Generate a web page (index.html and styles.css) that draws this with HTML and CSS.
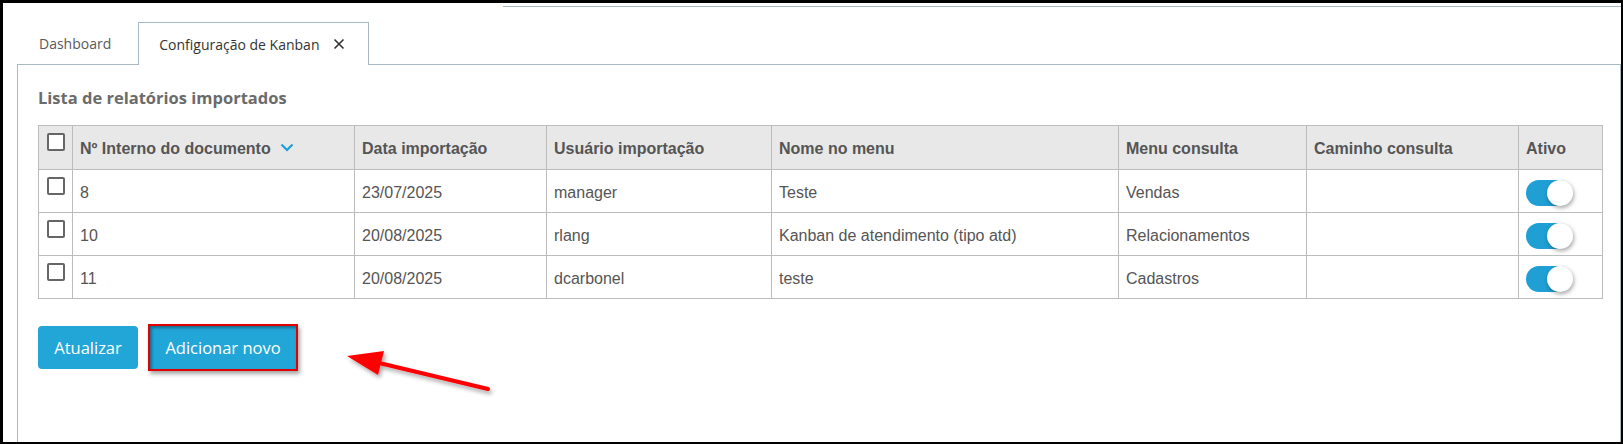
FILE: index.html
```html
<!DOCTYPE html>
<html lang="pt-BR">
<head>
<meta charset="utf-8">
<title>Configuração de Kanban</title>
<link rel="stylesheet" href="styles.css">
</head>
<body>
<div class="frame">
  <div class="topbar"><div class="topline"></div></div>
  <div class="workspace">
    <div class="tabs">
      <div class="tab">Dashboard</div>
      <div class="tab tab-active">Configuração de Kanban
        <svg class="tab-close" width="12" height="12" viewBox="0 0 12 12"><path d="M1.5 1.5 L10.5 10.5 M10.5 1.5 L1.5 10.5" stroke="#333" stroke-width="1.6" fill="none"/></svg>
      </div>
    </div>
    <div class="panel">
      <h2 class="title">Lista de relatórios importados</h2>
      <table class="grid">
        <colgroup>
          <col class="c-chk"><col class="c-num"><col class="c-date"><col class="c-user"><col class="c-name"><col class="c-menu"><col class="c-path"><col class="c-act">
        </colgroup>
        <thead>
          <tr>
            <th class="chk"><span class="box"></span></th>
            <th>Nº Interno do documento <svg class="chev" width="14" height="9" viewBox="0 0 14 9"><path d="M1.5 1.5 L7 7 L12.5 1.5" stroke="#1e9fd9" stroke-width="2.2" fill="none"/></svg></th>
            <th>Data importação</th>
            <th>Usuário importação</th>
            <th>Nome no menu</th>
            <th>Menu consulta</th>
            <th>Caminho consulta</th>
            <th>Ativo</th>
          </tr>
        </thead>
        <tbody>
          <tr>
            <td class="chk"><span class="box"></span></td>
            <td>8</td><td>23/07/2025</td><td>manager</td><td>Teste</td><td>Vendas</td><td></td>
            <td><span class="toggle"><span class="knob"></span></span></td>
          </tr>
          <tr>
            <td class="chk"><span class="box"></span></td>
            <td>10</td><td>20/08/2025</td><td>rlang</td><td>Kanban de atendimento (tipo atd)</td><td>Relacionamentos</td><td></td>
            <td><span class="toggle"><span class="knob"></span></span></td>
          </tr>
          <tr>
            <td class="chk"><span class="box"></span></td>
            <td>11</td><td>20/08/2025</td><td>dcarbonel</td><td>teste</td><td>Cadastros</td><td></td>
            <td><span class="toggle"><span class="knob"></span></span></td>
          </tr>
        </tbody>
      </table>
      <div class="actions">
        <button class="btn">Atualizar</button>
        <button class="btn btn-mark">Adicionar novo</button>
      </div>
    </div>
  </div>
  <svg class="arrow" width="1623" height="444" viewBox="0 0 1623 444">
    <defs>
      <filter id="sh" x="-20%" y="-50%" width="140%" height="200%">
        <feDropShadow dx="2" dy="3" stdDeviation="2" flood-color="#000" flood-opacity="0.35"/>
      </filter>
    </defs>
    <g filter="url(#sh)">
      <line x1="488" y1="389" x2="375" y2="362" stroke="#ff0000" stroke-width="4" stroke-linecap="round"/>
      <polygon points="347,356 384,351 378,375" fill="#ff0000"/>
    </g>
  </svg>
</div>
</body>
</html>
```
FILE: styles.css
```css
* { box-sizing: border-box; }
html, body { margin: 0; padding: 0; background: #fff; }
.frame {
  position: relative;
  width: 1623px;
  height: 444px;
  border-style: solid;
  border-color: #000;
  border-width: 3px 2px 2px 3px;
  background: #fff;
  overflow: hidden;
  font-family: "Open Sans", "Noto Sans", sans-serif;
}
.topbar { height: 4px; padding-left: 500px; padding-top: 3px; }
.topline { border-top: 1px solid #a9b9c3; }
.workspace {
  padding-left: 14px;
  padding-top: 15px;
  height: 435px;
  display: flex;
  flex-direction: column;
}
.tabs { display: flex; align-items: flex-end; height: 42px; position: relative; z-index: 1; }
.tab {
  height: 42px;
  display: flex;
  align-items: center;
  padding: 0 26px 0 21px;
  font-size: 14px;
  color: #5a5a5a;
  border: 1px solid transparent;
  border-bottom: none;
}
.tab-active {
  width: 231px;
  padding: 0 18px 0 20px;
  color: #333;
  background: #fff;
  border-color: #a9b9c3;
  height: 43px;
  margin-bottom: -1px;
}
.tab-close { margin-left: 14px; }
.panel {
  flex: 1;
  border: 1px solid #a9b9c3;
  border-bottom: none;
  padding: 0 0 0 20px;
}
.title {
  margin: 22px 0 16px 0;
  font-size: 16.5px;
  line-height: 22px;
  font-weight: 700;
  color: #6b6b6b;
}
.grid {
  border-collapse: collapse;
  table-layout: fixed;
  width: 1564px;
  font-family: "Liberation Sans", Arial, sans-serif;
  font-size: 16px;
  color: #555;
}
.c-chk { width: 34px; }
.c-num { width: 282px; }
.c-date { width: 192px; }
.c-user { width: 225px; }
.c-name { width: 347px; }
.c-menu { width: 188px; }
.c-path { width: 212px; }
.c-act { width: 84px; }
.grid th, .grid td {
  border: 1px solid #bcbcbc;
  padding: 0 7px;
  text-align: left;
  vertical-align: middle;
  white-space: nowrap;
}
.grid th {
  background: #e8e8e8;
  font-weight: 700;
  height: 44px;
  padding-top: 2px;
}
.grid td { height: 43px; padding-top: 3px; }
.grid .chk { vertical-align: top; padding: 7px 0 0 8px; }
.grid th.chk { padding-top: 7px; }
.box {
  display: block;
  width: 18px;
  height: 18px;
  border: 2px solid #666;
  border-radius: 2px;
  background: #fff;
}
.chev { margin-left: 5px; vertical-align: 2px; }
.toggle {
  display: block;
  position: relative;
  width: 46px;
  height: 26px;
  border-radius: 13px;
  background: #1f9fd4;
  margin-left: 0;
}
.knob {
  position: absolute;
  right: -1px;
  top: 0;
  width: 26px;
  height: 26px;
  border-radius: 50%;
  background: #fff;
  box-shadow: 1px 2px 4px rgba(0,0,0,0.35);
}
.actions {
  display: flex;
  align-items: center;
  gap: 10px;
  margin-top: 25px;
}
.btn {
  font-family: "Open Sans", "Noto Sans", sans-serif;
  font-size: 16.5px;
  color: #fff;
  background: #22a6d8;
  border: none;
  border-radius: 4px;
  height: 43px;
  width: 100px;
  padding: 0;
}
.btn-mark {
  width: 150px;
  height: 47px;
  border: 2px solid #e30000;
  border-radius: 0;
  box-shadow: 2px 3px 4px rgba(0,0,0,0.35), inset 2px 2px 3px rgba(0,0,0,0.35);
}
.arrow { position: absolute; left: -3px; top: -3px; pointer-events: none; }
```
